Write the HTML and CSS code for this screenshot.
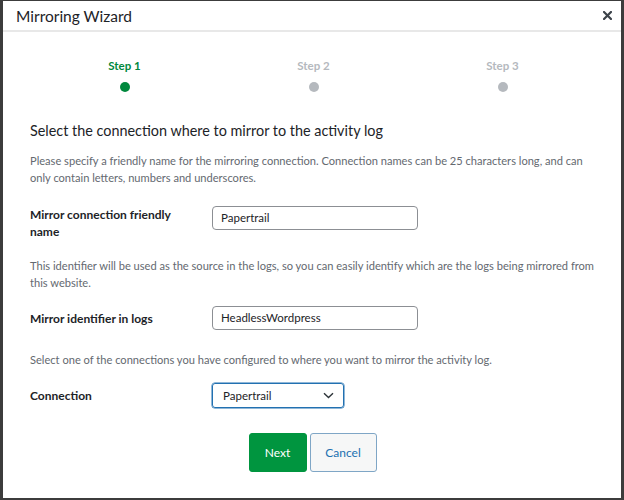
FILE: index.html
```html
<!DOCTYPE html>
<html>
<head>
<meta charset="utf-8">
<link rel="stylesheet" href="styles.css">
</head>
<body>
<div class="frame">
  <div class="modal">
    <div class="header">
      <div class="title">Mirroring Wizard</div>
      <svg class="close" width="9" height="9" viewBox="0 0 9 9"><path d="M1 1 L8 8 M8 1 L1 8" stroke="#3c434a" stroke-width="2.2" stroke-linecap="square"/></svg>
    </div>
    <div class="body">
      <div class="steps">
        <div class="step active"><span class="step-label">Step 1</span><span class="dot"></span></div>
        <div class="step"><span class="step-label">Step 2</span><span class="dot"></span></div>
        <div class="step"><span class="step-label">Step 3</span><span class="dot"></span></div>
      </div>
      <h2 class="heading">Select the connection where to mirror to the activity log</h2>
      <p class="desc intro">Please specify a friendly name for the mirroring connection. Connection names can be 25 characters long, and can only contain letters, numbers and underscores.</p>
      <div class="row row-top">
        <label class="label">Mirror connection friendly name</label>
        <div class="input">Papertrail</div>
      </div>
      <p class="desc">This identifier will be used as the source in the logs, so you can easily identify which are the logs being mirrored from this website.</p>
      <div class="row">
        <label class="label">Mirror identifier in logs</label>
        <div class="input">HeadlessWordpress</div>
      </div>
      <p class="desc">Select one of the connections you have configured to where you want to mirror the activity log.</p>
      <div class="row">
        <label class="label">Connection</label>
        <div class="select"><span>Papertrail</span>
          <svg width="11" height="7" viewBox="0 0 11 7"><path d="M1 1.2 L5.5 5.5 L10 1.2" fill="none" stroke="#2c3338" stroke-width="1.4"/></svg>
        </div>
      </div>
      <div class="buttons">
        <button class="btn next">Next</button>
        <button class="btn cancel">Cancel</button>
      </div>
    </div>
  </div>
</div>
</body>
</html>
```
FILE: styles.css
```css
html, body {
  margin: 0;
  padding: 0;
  background: #3c3c3c;
}
body {
  width: 624px;
  height: 500px;
  overflow: hidden;
  font-family: "Lato", "Noto Sans", sans-serif;
  color: #1d2327;
}
.frame {
  padding: 1px 3px 2px 3px;
  height: 497px;
}
.modal {
  background: #fff;
  height: 497px;
}
.header {
  height: 29px;
  border-bottom: 2px solid #e8e8e8;
  display: flex;
  align-items: center;
  justify-content: space-between;
  padding: 0 9px 0 13px;
}
.title {
  font-size: 15.5px;
  color: #1d2327;
}
.close {
  display: block;
}
.body {
  padding: 0 20px 0 27px;
}
.steps {
  display: grid;
  grid-template-columns: repeat(3, 1fr);
  padding: 27px 4px 0 0;
}
.step {
  display: flex;
  flex-direction: column;
  align-items: center;
  gap: 9px;
}
.step-label {
  font-size: 11.5px;
  font-weight: 700;
  color: #b5b9be;
  line-height: 14px;
}
.dot {
  width: 10px;
  height: 10px;
  border-radius: 50%;
  background: #b5b9be;
}
.step.active .step-label { color: #00883d; }
.step.active .dot { background: #00883d; }
.heading {
  font-size: 14.4px;
  font-weight: 400;
  margin: 29px 0 0;
  line-height: 20px;
}
.desc {
  font-size: 11.1px;
  color: #646970;
  line-height: 17px;
  margin: 21px 0 0;
}
.desc.intro {
  margin-top: 11px;
}
.row {
  display: flex;
  align-items: center;
  margin-top: 15px;
}
.row-top {
  align-items: flex-start;
  margin-top: 20px;
}
.row-top + .desc {
  margin-top: 17px;
}
.label {
  box-sizing: border-box;
  width: 182px;
  padding-right: 30px;
  font-size: 12px;
  font-weight: 700;
  line-height: 17px;
  color: #1d2327;
}
.input {
  box-sizing: border-box;
  width: 206px;
  height: 24px;
  border: 1px solid #8c8f94;
  border-radius: 4px;
  font-size: 11.5px;
  line-height: 22px;
  padding: 0 8px;
}
.select {
  box-sizing: border-box;
  width: 132px;
  height: 25px;
  border: 1px solid #2271b1;
  border-radius: 3px;
  box-shadow: 0 0 0 0.5px #2271b1;
  font-size: 11.5px;
  display: flex;
  align-items: center;
  justify-content: space-between;
  padding: 0 9px 0 10px;
}
.select svg {
  display: block;
}
.buttons {
  display: flex;
  justify-content: center;
  gap: 3px;
  margin-top: 25px;
  padding-right: 6px;
}
.btn {
  font-family: "Lato", "Noto Sans", sans-serif;
  font-size: 12px;
  height: 39px;
  border-radius: 3px;
  padding: 0;
}
.next {
  width: 58px;
  background: #00953f;
  border: 1px solid #00953f;
  color: #fff;
}
.cancel {
  width: 67px;
  background: #f6f7f7;
  border: 1px solid #7fa6c6;
  color: #2271b1;
}
```
